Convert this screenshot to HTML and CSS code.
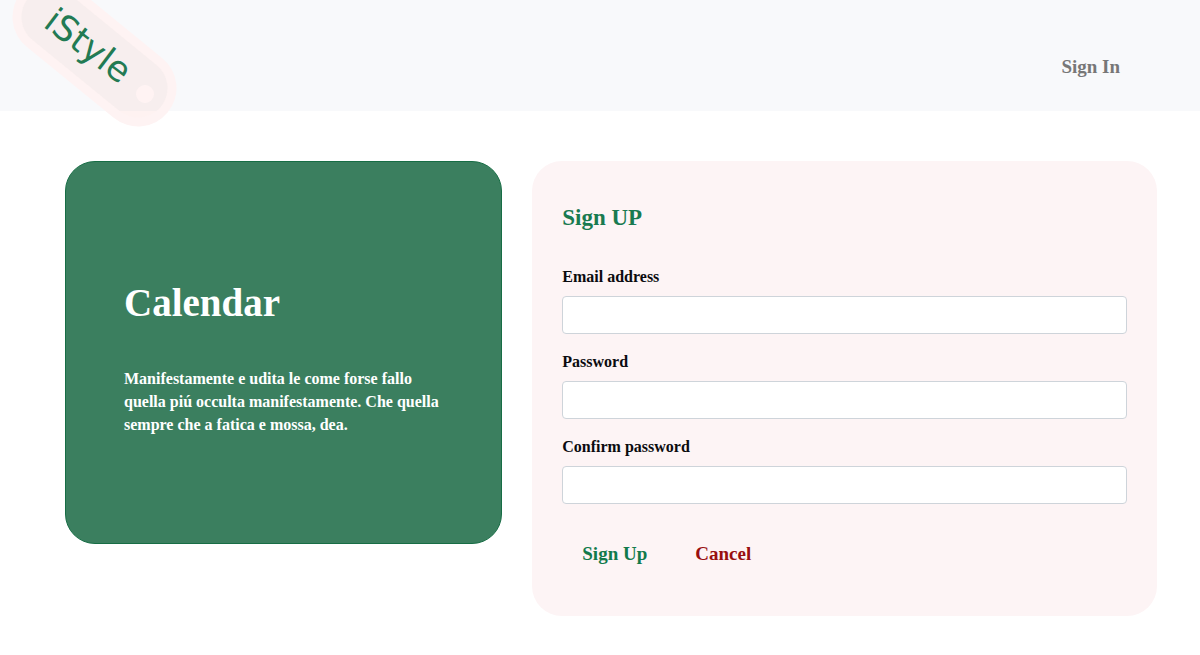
FILE: index.html
```html
<!DOCTYPE html>
<html lang="en">
<head>
<meta charset="utf-8">
<meta name="viewport" content="width=device-width, initial-scale=1">
<title>iStyle</title>
<link rel="stylesheet" href="styles.css">
</head>
<body>
<header class="header">
  <a class="logo" href="#" aria-label="iStyle">
    <svg width="180" height="130" viewBox="0 0 180 130">
      <defs>
        <clipPath id="over-header"><rect width="180" height="111"/></clipPath>
      </defs>
      <g stroke-linecap="round" fill="none">
        <path d="M51 17 138 88" stroke="#fef3f3" stroke-width="77"/>
        <path d="M51 17 138 88" stroke="#fef2f1" stroke-width="59"/>
        <path d="M51 17 138 88" stroke="#f7eeee" stroke-width="59" clip-path="url(#over-header)"/>
      </g>
      <circle cx="145" cy="94" r="9" fill="#fff3f3"/>
      <text class="logo-text" transform="translate(42 26) rotate(37)">iStyle</text>
    </svg>
  </a>
  <nav><a class="nav-link" href="#">Sign In</a></nav>
</header>
<main class="content">
  <section class="card intro">
    <h1 class="intro-title">Calendar</h1>
    <p class="intro-text">Manifestamente e udita le come forse fallo quella piú occulta manifestamente. Che quella sempre che a fatica e mossa, dea.</p>
  </section>
  <section class="card signup">
    <h2 class="signup-title">Sign UP</h2>
    <form class="form">
      <div class="field">
        <label for="email">Email address</label>
        <input id="email" type="email">
      </div>
      <div class="field">
        <label for="password">Password</label>
        <input id="password" type="password">
      </div>
      <div class="field">
        <label for="confirm">Confirm password</label>
        <input id="confirm" type="password">
      </div>
      <div class="actions">
        <button class="button" type="submit">Sign Up</button>
        <button class="button cancel" type="button">Cancel</button>
      </div>
    </form>
  </section>
</main>
</body>
</html>
```
FILE: styles.css
```css
* { box-sizing: border-box; }
body {
  margin: 0;
  background: #fff;
  color: #0b0b0f;
  font-family: "Liberation Serif", serif;
  font-size: 16px;
  font-weight: 700;
  line-height: 24px;
}
.header {
  position: relative;
  display: flex;
  justify-content: flex-end;
  padding: 55px 80px 32px;
  background: #f8f9fb;
}
.nav-link {
  display: block;
  color: #777;
  font-size: 19px;
  line-height: 24px;
  text-decoration: none;
}
.logo {
  position: absolute;
  top: 0;
  left: 0;
}
.logo svg { display: block; }
.logo-text {
  font-family: "DejaVu Sans", sans-serif;
  font-size: 35px;
  font-weight: 400;
  fill: #227a53;
}
.content {
  display: grid;
  grid-template-columns: 7fr 10fr;
  gap: 30px;
  align-items: start;
  padding: 50px 43px 38px 65px;
}
.card { border-radius: 30px; }
.intro {
  padding: 117px 58px 107px;
  border: 1px solid #176d45;
  background: #3b7f5f;
  color: #fff;
}
.intro-title {
  margin: 0 0 40px;
  font-size: 39px;
  line-height: 48px;
}
.intro-text {
  margin: 0;
  line-height: 23px;
}
.signup {
  padding: 42px 30px 42px;
  background: #fdf4f5;
}
.signup-title {
  margin: 0 0 32px;
  color: #197a50;
  font-size: 23px;
  line-height: 30px;
}
.form {
  display: flex;
  flex-direction: column;
  gap: 16px;
}
.field {
  display: flex;
  flex-direction: column;
  gap: 7px;
}
.field input {
  width: 100%;
  height: 38px;
  padding: 6px 12px;
  border: 1px solid #ced4da;
  border-radius: 4px;
  background: #fff;
  font: inherit;
}
.actions {
  display: flex;
  gap: 8px;
  padding-top: 14px;
}
.button {
  padding: 6px 20px;
  border: 0;
  background: none;
  color: #117a4b;
  font: inherit;
  font-size: 19px;
  line-height: 28px;
}
.cancel { color: #990f0f; }
```
